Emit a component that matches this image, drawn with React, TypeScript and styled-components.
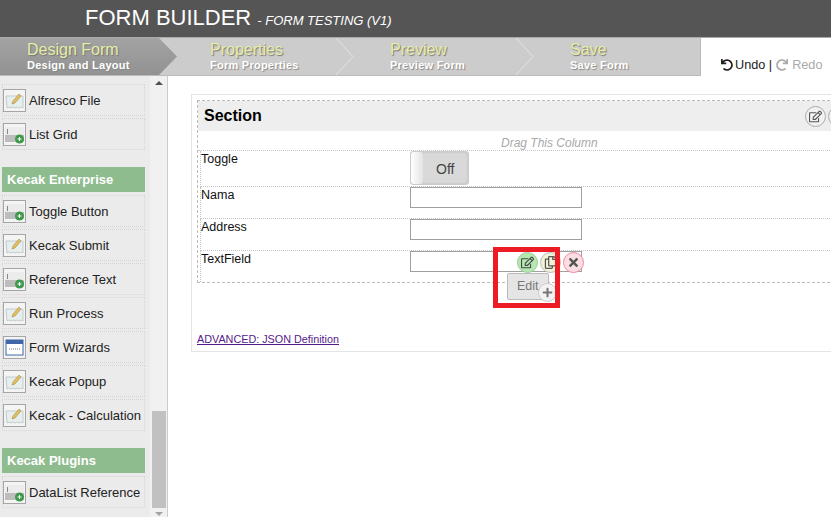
import React from 'react';
import styled, { createGlobalStyle } from 'styled-components';
import { FaUndo, FaRedo, FaRegEdit, FaRegCopy, FaTimes, FaPlus } from 'react-icons/fa';

const GlobalStyle = createGlobalStyle`
  html, body {
    margin: 0;
    padding: 0;
    height: 100%;
    overflow: hidden;
    background: #fff;
    font-family: "Liberation Sans", Arial, sans-serif;
  }
  * { box-sizing: border-box; }
`;

const Page = styled.div`
  display: flex;
  flex-direction: column;
  width: 831px;
  height: 517px;
  overflow: hidden;
`;

const Header = styled.div`
  height: 37px;
  flex: none;
  background: #555;
  color: #fff;
  padding: 5px 0 0 85px;
  display: flex;
  align-items: baseline;
  gap: 6px;
`;

const Title = styled.span`
  font-size: 22px;
`;

const SubTitle = styled.span`
  font-size: 13px;
  font-style: italic;
`;

const TabBar = styled.div`
  height: 39px;
  flex: none;
  display: flex;
  background: #ccc;
  border-top: 1px solid #aaa;
  border-bottom: 1px solid #bbb;
`;

const Tab = styled.div<{ $active?: boolean }>`
  position: relative;
  width: ${props => (props.$active ? 177 : 180)}px;
  flex: none;
  padding: 3px 0 0 ${props => (props.$active ? 27 : 33)}px;
  background: ${props => (props.$active ? 'linear-gradient(#a3a3a3, #929292)' : 'transparent')};
  clip-path: ${props =>
    props.$active ? 'polygon(0 0, 159px 0, 100% 50%, 159px 100%, 0 100%)' : 'none'};
`;

const TabName = styled.div`
  font-size: 16px;
  line-height: 17px;
  color: #e6eda6;
  text-shadow: 1px 1px 1px #777;
`;

const TabHint = styled.div`
  font-size: 11px;
  line-height: 14px;
  font-weight: bold;
  letter-spacing: 0.25px;
  color: #fff;
  text-shadow: 1px 1px 1px #888;
`;

const Chevron = styled.svg`
  position: absolute;
  top: 0;
  right: 2px;
`;

const TabSpacer = styled.div`
  width: 163px;
  flex: none;
`;

const History = styled.div`
  flex: 1;
  background: #fff;
  border-left: 1px solid #bbb;
  padding: 16px 0 0 20px;
  font-size: 12.7px;
  line-height: 15px;
  color: #222;
  display: flex;
  align-items: center;
  gap: 2px;
  height: 38px;
`;

const Muted = styled.span`
  color: #aaa;
  display: flex;
  align-items: center;
  gap: 4px;
  margin-left: 2px;
`;

const Body = styled.div`
  flex: 1;
  display: flex;
  min-height: 0;
`;

const Palette = styled.div`
  width: 150px;
  flex: none;
  background: #ebebeb;
  padding: 8px 5px 0 2px;
`;

const PaletteGroup = styled.div`
  margin-bottom: 17px;
`;

const GroupHeading = styled.div`
  height: 25px;
  background: #8fbc8f;
  color: #fff;
  font-size: 13px;
  font-weight: bold;
  line-height: 25px;
  padding-left: 5px;
  margin-bottom: 3px;
`;

const Tool = styled.div`
  height: 32px;
  margin-bottom: 2px;
  border: 1px dotted #d5d5d5;
  display: flex;
  align-items: center;
  gap: 3px;
  font-size: 13px;
  color: #222;
  white-space: nowrap;
`;

const ToolIcon = styled.span`
  width: 23px;
  height: 23px;
  flex: none;
  border: 1px solid #a5a5a5;
  background: #f4f4f4;
  display: flex;
`;

const ScrollTrack = styled.div`
  width: 18px;
  flex: none;
  background: #f1f1f1;
  border-right: 1px solid #ccc;
  padding: 0 1px 0 2px;
  display: flex;
  flex-direction: column;
  align-items: center;
`;

const ArrowUp = styled.div`
  margin-top: 5px;
  width: 0;
  height: 0;
  border-left: 4px solid transparent;
  border-right: 4px solid transparent;
  border-bottom: 4px solid #505050;
`;

const ScrollThumb = styled.div`
  margin-top: 326px;
  width: 100%;
  height: 97px;
  background: #c1c1c1;
`;

const ArrowDown = styled.div`
  margin-top: 4px;
  width: 0;
  height: 0;
  border-left: 4px solid transparent;
  border-right: 4px solid transparent;
  border-top: 4px solid #a3a3a3;
`;

const Canvas = styled.div`
  flex: 1;
  background: #fff;
  padding: 18px 0 0 23px;
  min-width: 0;
`;

const Card = styled.div`
  position: relative;
  width: 700px;
  height: 258px;
  border: 1px solid #e4e4e4;
  padding: 5px;
  font-size: 12.5px;
  color: #111;
`;

const Section = styled.div`
  border: 1px dashed #bbb;
  height: 183px;
`;

const SectionBar = styled.div`
  height: 30px;
  background: #eee;
  display: flex;
  align-items: center;
  padding-left: 6px;
  font-size: 16px;
  font-weight: bold;
  color: #000;
`;

const SectionTools = styled.div`
  display: flex;
  gap: 2px;
  margin-left: 543px;
`;

const DragHint = styled.div`
  height: 20px;
  padding-left: 303px;
  font-size: 12px;
  line-height: 24px;
  font-style: italic;
  color: #a9a9a9;
  border-bottom: 1px dotted #c5c5c5;
`;

const Row = styled.div<{ $height: number }>`
  height: ${props => props.$height}px;
  display: flex;
  margin-left: 2px;
  border-left: 1px dotted #c5c5c5;
  border-bottom: 1px dotted #c5c5c5;
  &:last-child { border-bottom: none; }
`;

const Label = styled.div`
  width: 209px;
  flex: none;
  line-height: 16px;
`;

const Input = styled.div`
  width: 172px;
  height: 21px;
  background: #fff;
  border: 1px solid #a0a0a0;
`;

const Toggle = styled.div`
  width: 59px;
  height: 34px;
  background: #d9d9d9;
  border: 1px solid #ccc;
  border-radius: 3px;
  box-shadow: inset 0 0 3px #bbb;
  display: flex;
  align-items: center;
  font-size: 14px;
  color: #444;
  gap: 13px;
`;

const ToggleKnob = styled.div`
  width: 12px;
  height: 32px;
  background: linear-gradient(90deg, #fff, #e3e3e3);
  border-radius: 3px;
`;

const OffLabel = styled.span`
  padding-top: 2px;
`;

const Advanced = styled.a`
  display: block;
  margin-top: 50px;
  font-size: 10.8px;
  line-height: 12px;
  color: #551a8b;
  text-decoration: underline;
`;

const RoundButton = styled.span<{ $bg: string; $ring: string; $color: string }>`
  width: 21px;
  height: 21px;
  flex: none;
  border-radius: 50%;
  background: ${props => props.$bg};
  border: 1px solid ${props => props.$ring};
  color: ${props => props.$color};
  display: flex;
  align-items: center;
  justify-content: center;
  font-size: 13px;
`;

const Hover = styled.div`
  position: absolute;
  left: 325px;
  top: 157px;
  display: flex;
  gap: 2px;
`;

const EditTip = styled.div`
  position: absolute;
  left: 315px;
  top: 178px;
  width: 42px;
  height: 27px;
  background: #e5e5e5;
  border: 1px solid #bbb;
  border-radius: 2px;
  color: #777;
  font-size: 12.5px;
  line-height: 25px;
  padding-left: 9px;
`;

const PlusBadge = styled.span`
  position: absolute;
  left: 30px;
  top: 9px;
  width: 19px;
  height: 19px;
  border-radius: 50%;
  background: #f3f3f3;
  border: 1px solid #ccc;
  color: #777;
  display: flex;
  align-items: center;
  justify-content: center;
  font-size: 11px;
`;

const Highlight = styled.div`
  position: absolute;
  left: 301px;
  top: 152px;
  width: 67px;
  height: 61px;
  border: 5px solid #ed1c24;
  pointer-events: none;
`;

const PencilGlyph = () => (
  <svg width="21" height="21" viewBox="0 0 21 21">
    <path d="M2 6h17v12l-2-1-2 1-2-1-2 1-2-1-2 1-2-1-2 1z" fill="#e6eeee" stroke="#c2cccc" />
    <path d="M8 14l1-3 6-7 2 2-6 7z" fill="#e2c062" stroke="#a88c48" strokeWidth="0.6" />
  </svg>
);

const FieldGlyph = () => (
  <svg width="21" height="21" viewBox="0 0 21 21">
    <rect x="1" y="3" width="19" height="15" fill="#ececec" />
    <rect x="1" y="11" width="19" height="7" fill="#bdbdbd" />
    <path d="M3.5 5v5" stroke="#888" />
    <circle cx="15.5" cy="15" r="4.5" fill="#3c9a4a" />
    <path d="M13.5 15h4M15.5 13v4" stroke="#fff" />
  </svg>
);

const WizardGlyph = () => (
  <svg width="21" height="21" viewBox="0 0 21 21">
    <rect x="2" y="3" width="17" height="15" fill="#fff" stroke="#3f66a8" />
    <rect x="2" y="3" width="17" height="4" fill="#3f66a8" />
    <path d="M5 12h11" stroke="#777" strokeDasharray="1 1" />
  </svg>
);

const glyphs = {
  pencil: <PencilGlyph />,
  field: <FieldGlyph />,
  wizard: <WizardGlyph />,
};

type ToolItem = { name: string; icon: keyof typeof glyphs };

const basicTools: ToolItem[] = [
  { name: 'Alfresco File', icon: 'pencil' },
  { name: 'List Grid', icon: 'field' },
];

const enterpriseTools: ToolItem[] = [
  { name: 'Toggle Button', icon: 'field' },
  { name: 'Kecak Submit', icon: 'pencil' },
  { name: 'Reference Text', icon: 'field' },
  { name: 'Run Process', icon: 'pencil' },
  { name: 'Form Wizards', icon: 'wizard' },
  { name: 'Kecak Popup', icon: 'pencil' },
  { name: 'Kecak - Calculation', icon: 'pencil' },
];

const tabs = [
  { name: 'Design Form', hint: 'Design and Layout', active: true },
  { name: 'Properties', hint: 'Form Properties' },
  { name: 'Preview', hint: 'Preview Form' },
];

const ToolList = ({ items }: { items: ToolItem[] }) => (
  <>
    {items.map(item => (
      <Tool key={item.name}>
        <ToolIcon>{glyphs[item.icon]}</ToolIcon>
        {item.name}
      </Tool>
    ))}
  </>
);

const App = () => (
  <Page>
    <GlobalStyle />
    <Header>
      <Title>FORM BUILDER</Title>
      <SubTitle>- FORM TESTING (V1)</SubTitle>
    </Header>

    <TabBar>
      {tabs.map(tab => (
        <Tab key={tab.name} $active={tab.active}>
          <TabName>{tab.name}</TabName>
          <TabHint>{tab.hint}</TabHint>
          {!tab.active && (
            <Chevron width="20" height="37" viewBox="0 0 20 37">
              <path d="M1 0l17 18.5L1 37" fill="none" stroke="#e2e2e2" />
            </Chevron>
          )}
        </Tab>
      ))}
      <TabSpacer>
        <Tab>
          <TabName>Save</TabName>
          <TabHint>Save Form</TabHint>
        </Tab>
      </TabSpacer>
      <History>
        <FaUndo size={12} />
        Undo |
        <Muted>
          <FaRedo size={12} />
          Redo
        </Muted>
      </History>
    </TabBar>

    <Body>
      <Palette>
        <PaletteGroup>
          <ToolList items={basicTools} />
        </PaletteGroup>
        <PaletteGroup>
          <GroupHeading>Kecak Enterprise</GroupHeading>
          <ToolList items={enterpriseTools} />
        </PaletteGroup>
        <GroupHeading>Kecak Plugins</GroupHeading>
        <ToolList items={[{ name: 'DataList Reference', icon: 'field' }]} />
      </Palette>

      <ScrollTrack>
        <ArrowUp />
        <ScrollThumb />
        <ArrowDown />
      </ScrollTrack>

      <Canvas>
        <Card>
          <Section>
            <SectionBar>
              Section
              <SectionTools>
                <RoundButton $bg="#f1f1f1" $ring="#aaa" $color="#555">
                  <FaRegEdit />
                </RoundButton>
                <RoundButton $bg="#f1f1f1" $ring="#aaa" $color="#555">
                  <FaRegCopy />
                </RoundButton>
              </SectionTools>
            </SectionBar>
            <DragHint>Drag This Column</DragHint>
            <Row $height={36}>
              <Label>Toggle</Label>
              <Toggle>
                <ToggleKnob />
                <OffLabel>Off</OffLabel>
              </Toggle>
            </Row>
            <Row $height={32}>
              <Label>Nama</Label>
              <Input />
            </Row>
            <Row $height={32}>
              <Label>Address</Label>
              <Input />
            </Row>
            <Row $height={31}>
              <Label>TextField</Label>
              <Input />
            </Row>
          </Section>
          <Advanced>ADVANCED: JSON Definition</Advanced>

          <Hover>
            <RoundButton $bg="#b4e8b0" $ring="#9ccb98" $color="#444">
              <FaRegEdit />
            </RoundButton>
            <RoundButton $bg="#f0f3d6" $ring="#bbb" $color="#555">
              <FaRegCopy />
            </RoundButton>
            <RoundButton $bg="#fbdde3" $ring="#ef8a9c" $color="#555">
              <FaTimes />
            </RoundButton>
          </Hover>
          <EditTip>
            Edit
            <PlusBadge>
              <FaPlus />
            </PlusBadge>
          </EditTip>
          <Highlight />
        </Card>
      </Canvas>
    </Body>
  </Page>
);

export default App;
